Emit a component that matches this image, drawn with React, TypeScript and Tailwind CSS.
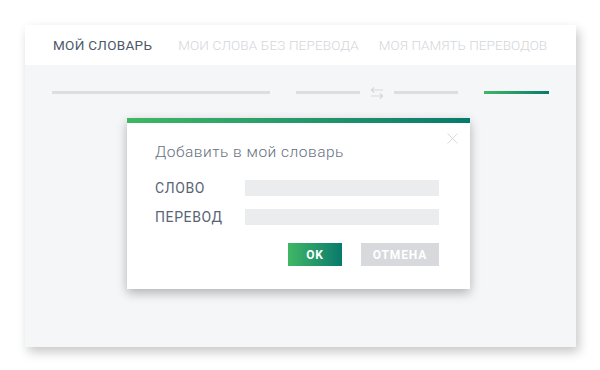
import React from 'react'

const tabs = [
  { label: 'МОЙ СЛОВАРЬ', cls: 'text-[#4e5868] tracking-[0.3px] mr-[26px]' },
  { label: 'МОИ СЛОВА БЕЗ ПЕРЕВОДА', cls: 'text-[#d3d6db] font-light tracking-[0.15px] mr-[20px]' },
  { label: 'МОЯ ПАМЯТЬ ПЕРЕВОДОВ', cls: 'text-[#d3d6db] font-light tracking-[0.05px]' },
]

const SwapIcon: React.FC = () => (
  <svg width="14" height="12" viewBox="0 0 14 12" fill="none" stroke="#d5d7db" strokeWidth="1.2">
    <path d="M13 3H1.5M4 0.5L1.5 3L4 5.5" />
    <path d="M1 9H12.5M10 6.5L12.5 9L10 11.5" />
  </svg>
)

const App: React.FC = () => {
  return (
    <div className="w-[600px] h-[370px] bg-white pl-[25px] pt-[25px] font-['Roboto',sans-serif]">
      <div className="w-[551px] h-[322px] bg-[#f5f6f8] shadow-[3px_5px_10px_rgba(0,0,0,0.22)] flex flex-col">
        {/* Tabs */}
        <div className="h-[40px] bg-white flex items-center pl-[28px] text-[13.5px]">
          {tabs.map((t) => (
            <span key={t.label} className={t.cls}>
              {t.label}
            </span>
          ))}
        </div>

        {/* Language bar */}
        <div className="flex items-center pl-[27px] mt-[20px] h-[15px]">
          <div className="w-[218px] h-[3px] bg-[#dcdee1]" />
          <div className="w-[64px] h-[3px] bg-[#dcdee1] ml-[26px]" />
          <div className="ml-[10px] mr-[10px] flex items-center">
            <SwapIcon />
          </div>
          <div className="w-[64px] h-[3px] bg-[#dcdee1]" />
          <div className="w-[65px] h-[3px] bg-gradient-to-r from-[#3fb764] to-[#067a6c] ml-[26px]" />
        </div>

        {/* Dialog */}
        <div className="ml-[102px] mt-[18px] w-[343px] h-[171px] bg-white shadow-[0_4px_10px_rgba(0,0,0,0.28)] flex flex-col relative">
          <div className="h-[5px] bg-gradient-to-r from-[#3fb764] to-[#067a6c]" />
          <svg className="absolute right-[12px] top-[15px]" width="11" height="11" viewBox="0 0 11 11" stroke="#d9dbde" strokeWidth="1">
            <path d="M0.5 0.5L10.5 10.5M10.5 0.5L0.5 10.5" />
          </svg>
          <div className="pl-[28px] pt-[20px] text-[15.5px] font-light text-[#667080] tracking-[0.5px] leading-[18px]">
            Добавить в мой словарь
          </div>
          <div className="flex flex-col gap-[13px] mt-[19px] pl-[28px]">
            <div className="flex items-center h-[16px]">
              <span className="w-[90px] text-[14px] text-[#5a6474] tracking-[0.6px]">СЛОВО</span>
              <div className="w-[194px] h-[16px] bg-[#ebeced]" />
            </div>
            <div className="flex items-center h-[16px]">
              <span className="w-[90px] text-[14px] text-[#5a6474] tracking-[0.6px]">ПЕРЕВОД</span>
              <div className="w-[194px] h-[16px] bg-[#ebeced]" />
            </div>
          </div>
          <div className="flex justify-end gap-[19px] pr-[31px] mt-[18px]">
            <button className="w-[54px] h-[23px] bg-gradient-to-r from-[#3fb764] to-[#067a6c] text-white text-[12px] font-bold tracking-[0.9px]">
              OK
            </button>
            <button className="w-[78px] h-[23px] bg-[#d7d9dc] text-white text-[12px] font-bold tracking-[0.9px]">
              ОТМЕНА
            </button>
          </div>
        </div>
      </div>
    </div>
  )
}

export default App
